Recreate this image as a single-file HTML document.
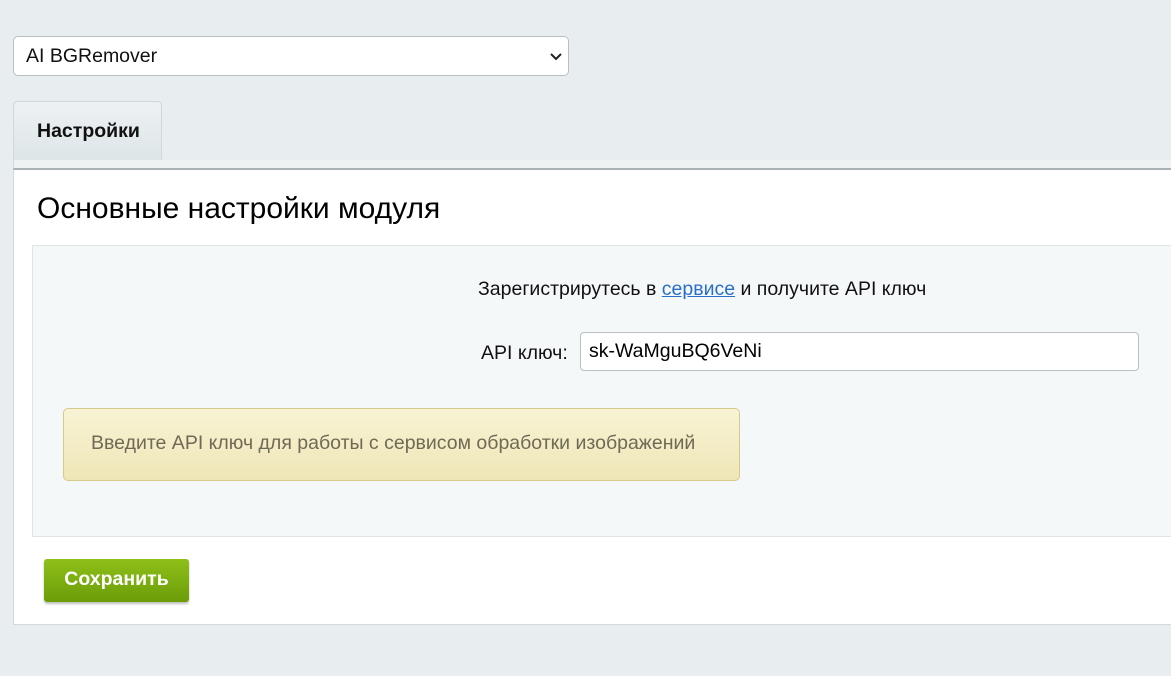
<!DOCTYPE html>
<html><head><meta charset="utf-8"><style>
body{margin:0;width:1171px;height:676px;background:#e8eef0;font-family:"Liberation Sans",Arial,sans-serif;position:relative;overflow:hidden}
.sel{position:absolute;left:13px;top:36px;width:556px;height:40px;background:#fff;border:1px solid #b9c0c3;border-radius:5px;box-sizing:border-box;font-size:19.5px;line-height:38px;padding-left:12px;color:#111}
.sel svg{position:absolute;right:5px;top:15px}
.tab{position:absolute;left:13px;top:101px;width:149px;height:60px;background:linear-gradient(#edf1f3,#dde5e8);border:1px solid #cfd8dc;border-bottom:none;border-radius:4px 4px 0 0;box-sizing:border-box;font-weight:bold;font-size:19.5px;padding:18px 0 0 23px;color:#111}
.strip{position:absolute;left:13px;top:160px;right:0;height:8px;background:#eef2f3;border-left:1px solid #cfd8dc}
.panel{position:absolute;left:13px;top:168px;right:0;height:457px;background:#fff;border-top:2px solid #a9b2b5;border-left:1px solid #cfd8dc;border-bottom:1px solid #d3dadd;box-sizing:border-box}
h1{position:absolute;left:23px;top:22px;margin:0;font-weight:normal;font-size:30px;color:#000}
.box{position:absolute;left:18px;top:75px;right:0;height:290px;background:#f5f8f9;border-top:1px solid #dfe5e7;border-left:1px solid #dfe5e7;border-bottom:1px solid #dfe5e7}
.t1{position:absolute;left:445px;top:32px;font-size:19.5px;color:#111}
.t1 a{color:#2a6fc6;text-decoration:underline}
.lbl{position:absolute;left:448px;top:96px;font-size:19.5px;color:#111}
.inp{position:absolute;left:547px;top:86px;width:559px;height:39px;border:1px solid #b9c0c3;border-radius:4px;background:#fff;box-sizing:border-box;font-size:19.5px;line-height:37px;padding-left:8px;color:#000}
.warn{position:absolute;left:30px;top:162px;width:677px;height:73px;border:1px solid #d6c98c;border-radius:5px;background:linear-gradient(#f8f3d4,#efe6b7);box-sizing:border-box;font-size:19.5px;color:#6f6a55;padding:23px 0 0 27px}
.btn{position:absolute;left:30px;top:389px;width:145px;height:43px;border-radius:3px;background:linear-gradient(#8ec019,#6c9c08);box-shadow:0 2px 2px rgba(0,0,0,.25);color:#fff;font-weight:bold;font-size:19.5px;text-align:center;line-height:40px;box-sizing:border-box}
</style></head><body>
<div class="sel">AI BGRemover<svg width="14" height="9" viewBox="0 0 14 9"><path d="M2 2l5 5 5-5" stroke="#222" stroke-width="2" fill="none"/></svg></div>
<div class="tab">Настройки</div>
<div class="strip"></div>
<div class="panel">
<h1>Основные настройки модуля</h1>
<div class="box">
<div class="t1">Зарегистрирутесь в <a>сервисе</a> и получите API ключ</div>
<div class="lbl">API ключ:</div>
<div class="inp">sk-WaMguBQ6VeNi</div>
<div class="warn">Введите API ключ для работы с сервисом обработки изображений</div>
</div>
<div class="btn">Сохранить</div>
</div>
</body></html>
